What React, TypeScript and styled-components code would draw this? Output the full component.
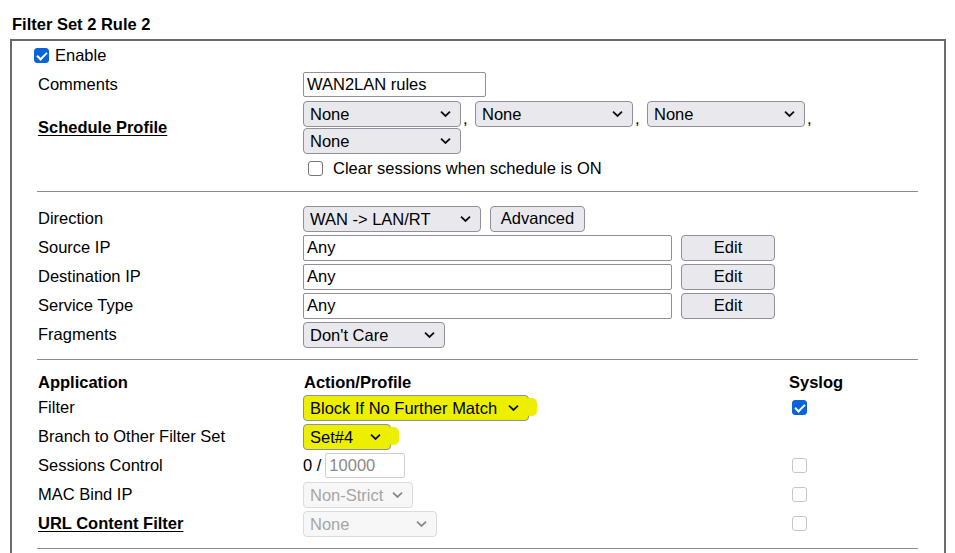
import styled, { createGlobalStyle } from "styled-components";

// estilos globais
const GlobalStyle = createGlobalStyle`
  * {
    box-sizing: border-box;
  }
  body {
    margin: 0;
    background: #fff;
    color: #000;
    font-family: "Liberation Sans", Arial, sans-serif;
    font-size: 16.5px;
  }
`;

const Page = styled.div`
  padding: 15px 0 0 10px;
`;

const Title = styled.h2`
  margin: 0 0 5px 2px;
  font-size: 16.5px;
  line-height: 19px;
  font-weight: bold;
`;

// caixa principal com a borda cinza
const Panel = styled.div`
  width: 936px;
  border: 2px solid #6a6a6a;
  padding: 0 26px 30px 25px;
`;

const EnableRow = styled.label`
  display: flex;
  align-items: center;
  gap: 6px;
  height: 28px;
  margin-left: -3px;
`;

const Section = styled.div<{ $top: number; $bottom: number }>`
  padding-top: ${(p) => p.$top}px;
  padding-bottom: ${(p) => p.$bottom}px;
  border-bottom: 1px solid #8c8c8c;
`;

const Row = styled.div<{ $h?: number; $cols?: string }>`
  display: grid;
  grid-template-columns: ${(p) => p.$cols ?? "266px 1fr"};
  align-items: center;
  height: ${(p) => p.$h ?? 29}px;
`;

const Label = styled.span<{ $strong?: boolean }>`
  padding-left: 1px;
  white-space: nowrap;
  font-weight: ${(p) => (p.$strong ? "bold" : "normal")};
  text-decoration: ${(p) => (p.$strong ? "underline" : "none")};
  text-underline-offset: 2px;
`;

const Head = styled.span`
  padding-left: 1px;
  font-weight: bold;
`;

const Cell = styled.div`
  display: flex;
  align-items: center;
  gap: 9px;
`;

const SelectGrid = styled.div`
  display: flex;
  flex-wrap: wrap;
  width: 520px;
  row-gap: 1px;
  padding: 2px 0;
`;

const Comma = styled.span`
  width: 14px;
  padding-left: 2px;
  align-self: flex-end;
  line-height: 18px;
`;

const TextBox = styled.input<{ $w: number; $light?: boolean }>`
  width: ${(p) => p.$w}px;
  height: 26px;
  border: 1px solid ${(p) => (p.$light ? "#cfcfd4" : "#8f8f9d")};
  border-radius: 2px;
  padding: 0 3px;
  font: inherit;
  color: #000;
  background: #fff;
  &::placeholder {
    color: #8a8a8a;
  }
`;

const Button = styled.button<{ $w: number }>`
  width: ${(p) => p.$w}px;
  height: 26px;
  border: 1px solid #8f8f9d;
  border-radius: 4px;
  background: #e9e9ed;
  font: inherit;
  color: #000;
  padding: 0;
`;

const SelectWrap = styled.span<{ $w: number; $hl?: boolean }>`
  position: relative;
  display: inline-flex;
  width: ${(p) => p.$w}px;
  height: 26px;

  /* trazo do marcador amarelo */
  &::after {
    content: "";
    display: ${(p) => (p.$hl ? "block" : "none")};
    position: absolute;
    right: -8px;
    top: 3px;
    width: 10px;
    height: 18px;
    border-radius: 2px 5px 5px 2px;
    background: #ecf000;
    pointer-events: none;
  }
`;

const NativeSelect = styled.select<{ $hl?: boolean }>`
  appearance: none;
  width: 100%;
  height: 100%;
  margin: 0;
  border: 1px solid #8f8f9d;
  border-radius: 4px;
  background: ${(p) => (p.$hl ? "#ecf000" : "#e9e9ed")};
  font: inherit;
  color: #000;
  padding: 0 26px 0 6px;
  &:disabled {
    background: #f4f4f6;
    border-color: #cdcdd2;
    color: #808080;
  }
`;

const Chevron = styled.svg<{ $off?: boolean }>`
  position: absolute;
  right: 10px;
  top: 50%;
  transform: translateY(-50%);
  pointer-events: none;
  z-index: 1;
  stroke: ${(p) => (p.$off ? "#8a8a8a" : "#111")};
`;

const Check = styled.input<{ $off?: boolean }>`
  appearance: none;
  position: relative;
  width: 15px;
  height: 15px;
  margin: 0;
  border: 1px solid ${(p) => (p.$off ? "#c6c6c6" : "#767676")};
  border-radius: 3px;
  background: #fff;
  &:checked {
    background: #0b63d8;
    border-color: #0b63d8;
  }
  &:checked::after {
    content: "";
    position: absolute;
    left: 4px;
    top: 1px;
    width: 4px;
    height: 8px;
    border: solid #fff;
    border-width: 0 2px 2px 0;
    transform: rotate(45deg);
  }
`;

const CheckLine = styled.label`
  display: flex;
  align-items: center;
  gap: 10px;
  padding-left: 5px;
`;

const SyslogCell = styled.div`
  padding-left: 3px;
  display: flex;
  align-items: center;
`;

const Select = ({
  w,
  value,
  hl,
  disabled,
}: {
  w: number;
  value: string;
  hl?: boolean;
  disabled?: boolean;
}) => (
  <SelectWrap $w={w} $hl={hl}>
    <NativeSelect $hl={hl} disabled={disabled} defaultValue={value}>
      <option>{value}</option>
    </NativeSelect>
    <Chevron $off={disabled} width="11" height="7" viewBox="0 0 11 7" fill="none" strokeWidth="1.8">
      <path d="M1 1.2 L5.5 5.5 L10 1.2" />
    </Chevron>
  </SelectWrap>
);

const cols3 = "266px 486px 1fr";

const App = () => {
  return (
    <>
      <GlobalStyle />
      <Page>
        <Title>Filter Set 2 Rule 2</Title>
        <Panel>
          <EnableRow>
            <Check type="checkbox" defaultChecked />
            Enable
          </EnableRow>

          <Section $top={0} $bottom={10}>
            <Row $h={30}>
              <Label>Comments</Label>
              <Cell>
                <TextBox $w={183} defaultValue="WAN2LAN rules" style={{ height: 25 }} />
              </Cell>
            </Row>
            <Row $h={57}>
              <Label $strong>Schedule Profile</Label>
              <SelectGrid>
                <Select w={158} value="None" />
                <Comma>,</Comma>
                <Select w={158} value="None" />
                <Comma>,</Comma>
                <Select w={158} value="None" />
                <Comma>,</Comma>
                <Select w={158} value="None" />
              </SelectGrid>
            </Row>
            <Row $h={25}>
              <span />
              <CheckLine>
                <Check type="checkbox" />
                Clear sessions when schedule is ON
              </CheckLine>
            </Row>
          </Section>

          <Section $top={12} $bottom={10}>
            <Row>
              <Label>Direction</Label>
              <Cell>
                <Select w={178} value="WAN -> LAN/RT" />
                <Button $w={95}>Advanced</Button>
              </Cell>
            </Row>
            <Row>
              <Label>Source IP</Label>
              <Cell>
                <TextBox $w={369} defaultValue="Any" />
                <Button $w={94}>Edit</Button>
              </Cell>
            </Row>
            <Row>
              <Label>Destination IP</Label>
              <Cell>
                <TextBox $w={369} defaultValue="Any" />
                <Button $w={94}>Edit</Button>
              </Cell>
            </Row>
            <Row>
              <Label>Service Type</Label>
              <Cell>
                <TextBox $w={369} defaultValue="Any" />
                <Button $w={94}>Edit</Button>
              </Cell>
            </Row>
            <Row>
              <Label>Fragments</Label>
              <Cell>
                <Select w={142} value="Don't Care" />
              </Cell>
            </Row>
          </Section>

          <Section $top={12} $bottom={10}>
            <Row $h={21} $cols={cols3}>
              <Head>Application</Head>
              <Head>Action/Profile</Head>
              <Head style={{ paddingLeft: 0 }}>Syslog</Head>
            </Row>
            <Row $cols={cols3}>
              <Label>Filter</Label>
              <Cell>
                <Select w={226} value="Block If No Further Match" hl />
              </Cell>
              <SyslogCell>
                <Check type="checkbox" defaultChecked />
              </SyslogCell>
            </Row>
            <Row $cols={cols3}>
              <Label>Branch to Other Filter Set</Label>
              <Cell>
                <Select w={88} value="Set#4" hl />
              </Cell>
              <span />
            </Row>
            <Row $cols={cols3}>
              <Label>Sessions Control</Label>
              <Cell style={{ gap: 4 }}>
                <span>0 /</span>
                <TextBox $w={80} $light placeholder="10000" style={{ height: 25 }} />
              </Cell>
              <SyslogCell>
                <Check type="checkbox" $off disabled />
              </SyslogCell>
            </Row>
            <Row $cols={cols3}>
              <Label>MAC Bind IP</Label>
              <Cell>
                <Select w={110} value="Non-Strict" disabled />
              </Cell>
              <SyslogCell>
                <Check type="checkbox" $off disabled />
              </SyslogCell>
            </Row>
            <Row $cols={cols3}>
              <Label $strong>URL Content Filter</Label>
              <Cell>
                <Select w={134} value="None" disabled />
              </Cell>
              <SyslogCell>
                <Check type="checkbox" $off disabled />
              </SyslogCell>
            </Row>
          </Section>
        </Panel>
      </Page>
    </>
  );
};

export default App;
